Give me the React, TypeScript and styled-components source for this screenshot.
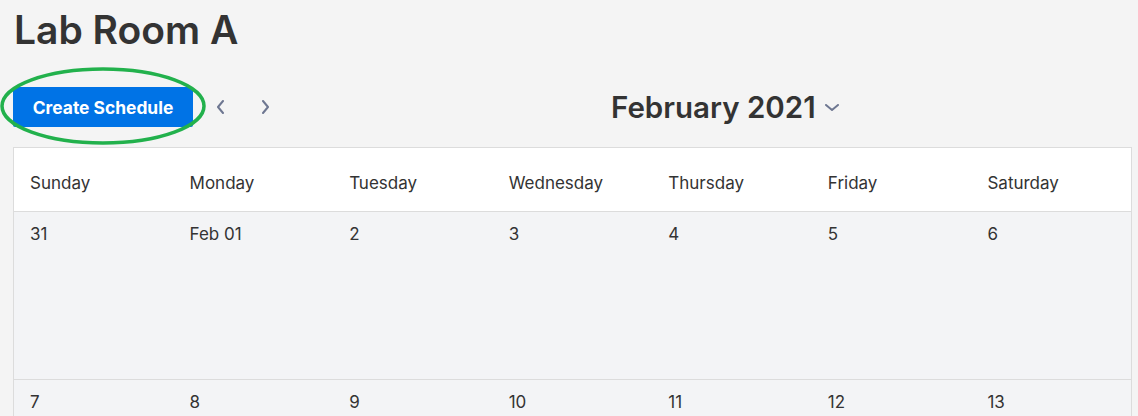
import React from "react";
import styled, { createGlobalStyle } from "styled-components";

const Global = createGlobalStyle`
  html, body { margin: 0; padding: 0; background: #f4f4f4; }
  body { font-family: Inter, "Noto Sans", Arial, sans-serif; color: #333; overflow: hidden; }
  *, *::before, *::after { box-sizing: border-box; }
`;

const Page = styled.div`
  padding: 6px 6px 0 13px;
`;

const Title = styled.h1`
  margin: 0 0 33px 1px;
  font-size: 39px;
  font-weight: 600;
  line-height: 48px;
  color: #333;
`;

const Toolbar = styled.div`
  display: flex;
  align-items: center;
  height: 40px;
  margin-bottom: 20px;
`;

const ButtonWrap = styled.div`
  position: relative;
`;

const PrimaryButton = styled.button`
  width: 180px;
  height: 40px;
  border: none;
  border-radius: 2px;
  background: #0073e6;
  color: #fff;
  font-family: Inter, Arial, sans-serif;
  font-size: 17.4px;
  font-weight: 700;
  cursor: pointer;
`;

const Highlight = styled.svg`
  position: absolute;
  left: -13px;
  top: -20px;
  width: 208px;
  height: 80px;
  pointer-events: none;
  overflow: visible;
`;

const NavGroup = styled.div`
  display: flex;
  align-items: center;
  gap: 31px;
  margin-left: 20px;
`;

const NavButton = styled.button`
  border: none;
  background: transparent;
  padding: 0;
  width: 14px;
  height: 18px;
  display: flex;
  align-items: center;
  justify-content: center;
  cursor: pointer;
`;

const MonthTitle = styled.div`
  display: flex;
  align-items: center;
  gap: 9px;
  margin-left: 339px;
  font-size: 29.5px;
  font-weight: 600;
  color: #333;
`;

const Calendar = styled.div`
  border: 1px solid #dcdcdc;
  display: grid;
  grid-template-columns: repeat(7, 1fr);
`;

const HeadCell = styled.div`
  height: 64px;
  background: #fff;
  border-bottom: 1px solid #dcdcdc;
  display: flex;
  align-items: center;
  padding: 6px 0 0 16px;
  font-size: 17px;
  color: #333;
`;

const DayCell = styled.div`
  height: 168px;
  background: #f3f4f6;
  border-bottom: 1px solid #dcdcdc;
  padding: 12px 0 0 16px;
  font-size: 17px;
  line-height: 21px;
  color: #333;
`;

const days = ["Sunday", "Monday", "Tuesday", "Wednesday", "Thursday", "Friday", "Saturday"];
const weeks = [
  ["31", "Feb 01", "2", "3", "4", "5", "6"],
  ["7", "8", "9", "10", "11", "12", "13"],
];

const Chevron = ({ dir }: { dir: "left" | "right" | "down" }) => {
  const d =
    dir === "left" ? "M6 1 L1 7 L6 13" : dir === "right" ? "M1 1 L6 7 L1 13" : "M1 1 L7 6 L13 1";
  const w = dir === "down" ? 14 : 7;
  const h = dir === "down" ? 7 : 14;
  return (
    <svg width={w} height={h} viewBox={`0 0 ${w} ${h}`}>
      <path d={d} fill="none" stroke="#6e7791" strokeWidth="2" strokeLinecap="round" strokeLinejoin="round" />
    </svg>
  );
};

export default function App() {
  return (
    <Page>
      <Global />
      <Title>Lab Room A</Title>
      <Toolbar>
        <ButtonWrap>
          <PrimaryButton>Create Schedule</PrimaryButton>
          <Highlight viewBox="0 0 208 80">
            <ellipse cx="103" cy="39" rx="101" ry="37" fill="none" stroke="#22b14c" strokeWidth="3.5" />
          </Highlight>
        </ButtonWrap>
        <NavGroup>
          <NavButton aria-label="Previous month">
            <Chevron dir="left" />
          </NavButton>
          <NavButton aria-label="Next month">
            <Chevron dir="right" />
          </NavButton>
        </NavGroup>
        <MonthTitle>
          February 2021
          <Chevron dir="down" />
        </MonthTitle>
      </Toolbar>
      <Calendar>
        {days.map((d) => (
          <HeadCell key={d}>{d}</HeadCell>
        ))}
        {weeks.flat().map((d, i) => (
          <DayCell key={i}>{d}</DayCell>
        ))}
      </Calendar>
    </Page>
  );
}
